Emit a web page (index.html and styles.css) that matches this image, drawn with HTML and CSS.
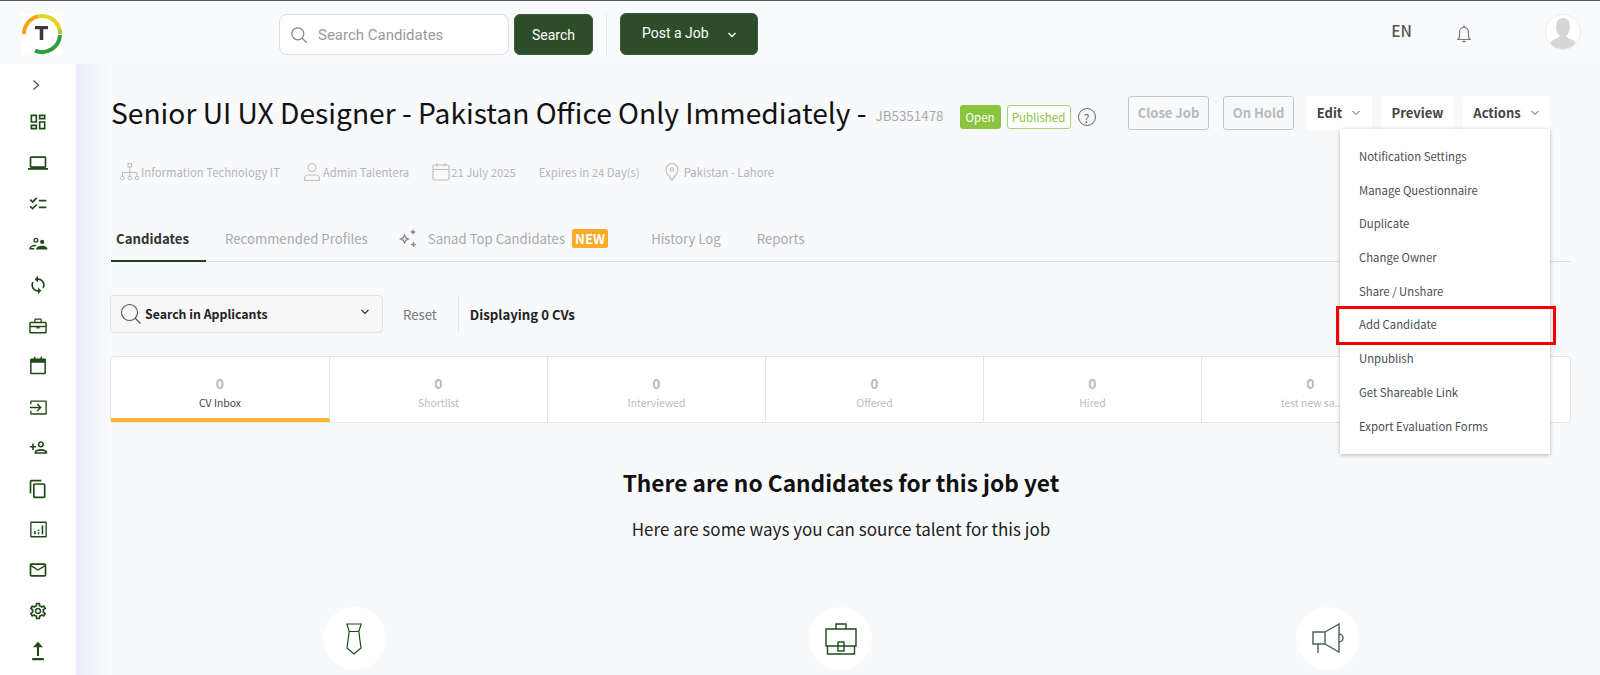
FILE: index.html
```html
<!DOCTYPE html>
<html lang="en">
<head>
  <meta charset="UTF-8">
  <meta name="viewport" content="width=device-width, initial-scale=1.0">
  <title>Senior UI UX Designer - Talentera</title>
  <link rel="stylesheet" href="styles.css">
</head>
<body>
<!--TOP BAR-->
  <header class="topbar">
    <div class="logo">
      <svg width="42" height="42" viewBox="0 0 42 42">
        <path d="M3 21A18 18 0 0 1 17 3.400" fill="none" stroke="#f9a11b" stroke-width="4"/>
        <path d="M17 3.400A18 18 0 0 1 38.400 16" fill="none" stroke="#e3d51f" stroke-width="4"/>
        <path d="M39 21A18 18 0 0 0 38.400 16" fill="none" stroke="#a9c92c" stroke-width="4"/>
        <path d="M39 22A18 18 0 0 1 14 37.600" fill="none" stroke="#2f9e3f" stroke-width="4"/>
        <path d="M14 13h13v3.200h-4.700V27h-3.600V16.200H14z" fill="#3a3a3a"/>
      </svg>
    </div>
    <div class="search-box">
      <svg class="search-icon" width="18" height="18" viewBox="0 0 18 18"><circle cx="7.800" cy="7.800" r="6" fill="none" stroke="#858a8f" stroke-width="1.300"/><path d="M12.200 12.200l4.500 4.500" stroke="#858a8f" stroke-width="1.300"/></svg>
      <span class="search-text">Search Candidates</span>
    </div>
    <button class="btn-green btn-search">Search</button>
    <div class="top-divider"></div>
    <button class="btn-green btn-post">Post a Job
      <svg width="10" height="6" viewBox="0 0 10 6"><path d="M1.500 1l3.500 3.500L8.500 1" fill="none" stroke="#fff" stroke-width="1.300"/></svg>
    </button>
    <div class="top-right">
      <span class="lang">EN</span>
      <svg class="bell" width="16" height="20" viewBox="0 0 16 20"><path d="M2 15.500h12l-1.500-2.500V8a4.500 4.500 0 0 0-9 0v5z" fill="none" stroke="#777" stroke-width="1.200"/><path d="M8 1.500v2M6.500 17.500h3" stroke="#777" stroke-width="1.500"/></svg>
      <div class="avatar">
        <svg width="34" height="34" viewBox="0 0 34 34"><path d="M17 3c4.500 0 7 3.500 7 8.500s-2 7.500-4 9.500c1 2 7 3 9 6l1 2a16.500 16.500 0 0 1-26 0l1-2c2-3 8-4 9-6-2-2-4-4.500-4-9.500S12.500 3 17 3z" fill="#d6d6d6"/></svg>
      </div>
    </div>
  </header>

  <div class="layout">
<!--SIDEBAR-->
    <nav class="sidebar">
      <div class="side-item side-toggle"><svg width="12" height="12" viewBox="0 0 12 12"><path d="M3.500 1.500l5 4.500-5 4.500" fill="none" stroke="#3d5a35" stroke-width="1.200"/></svg></div>
      <div class="side-item"><svg viewBox="0 0 24 24"><path d="M19 5v2h-4V5h4M9 5v6H5V5h4m10 8v6h-4v-6h4M9 17v2H5v-2h4M21 3h-8v6h8V3zM11 3H3v10h8V3zm10 8h-8v10h8V11zm-10 4H3v6h8v-6z"/></svg></div>
      <div class="side-item"><svg viewBox="0 0 24 24"><path d="M20 18c1.100 0 1.990-.9 1.990-2L22 6c0-1.100-.9-2-2-2H4c-1.100 0-2 .9-2 2v10c0 1.100.9 2 2 2H0v2h24v-2h-4zM4 6h16v10H4V6z"/></svg></div>
      <div class="side-item"><svg viewBox="0 0 24 24"><path d="M22 7h-9v2h9V7zm0 8h-9v2h9v-2zM5.540 11L2 7.460l1.410-1.410 2.120 2.120 4.240-4.240 1.410 1.410L5.540 11zm0 8L2 15.460l1.410-1.410 2.120 2.120 4.240-4.240 1.410 1.410L5.540 19z"/></svg></div>
      <div class="side-item"><svg viewBox="0 0 24 24"><path d="M9.500 4.500a3 3 0 1 1 0 6 3 3 0 0 1 0-6zm0 1.600a1.400 1.400 0 1 0 0 2.800 1.400 1.400 0 0 0 0-2.800zM17 7a2.500 2.500 0 1 1 0 5 2.500 2.500 0 0 1 0-5zM1.500 18.500c0-3.500 4-5.500 8-5.500l.8.100-1.400 1.600c-2.600.1-4.800 1.100-5.400 2.200H7.500v1.600zM9.500 18.500c0-2.800 4-4.500 7.500-4.500s6.500 1.700 6.500 4.500z"/></svg></div>
      <div class="side-item"><svg viewBox="0 0 24 24"><path d="M12 4V1L8 5l4 4V6c3.310 0 6 2.690 6 6 0 1.010-.25 1.970-.7 2.800l1.460 1.460C19.540 15.030 20 13.570 20 12c0-4.420-3.580-8-8-8zm0 14c-3.310 0-6-2.690-6-6 0-1.010.25-1.970.7-2.800L5.240 7.740C4.460 8.970 4 10.430 4 12c0 4.420 3.580 8 8 8v3l4-4-4-4v3z"/></svg></div>
      <div class="side-item"><svg viewBox="0 0 24 24"><path d="M9 3h6a1.500 1.500 0 0 1 1.500 1.500V7H21a1.500 1.500 0 0 1 1.500 1.500v11A1.500 1.500 0 0 1 21 21H3a1.500 1.500 0 0 1-1.500-1.500v-11A1.500 1.500 0 0 1 3 7h4.500V4.500A1.500 1.500 0 0 1 9 3zm0 4h6V4.600H9zM3.200 8.700v3.100h17.600V8.700zm0 4.800v5.800h17.600v-5.800H14V15h-4v-1.500z"/></svg></div>
      <div class="side-item"><svg viewBox="0 0 24 24"><path d="M7 1h2v2h6V1h2v2h3a1.500 1.500 0 0 1 1.500 1.500v16A1.500 1.500 0 0 1 20 22H4a1.500 1.500 0 0 1-1.500-1.500v-16A1.500 1.500 0 0 1 4 3h3zM4.300 8v12.200h15.400V8z"/></svg></div>
      <div class="side-item side-wide"><svg viewBox="0 0 24 24"><path d="M1.500 4.500A1.500 1.500 0 0 1 3 3h18a1.500 1.500 0 0 1 1.500 1.500v15A1.500 1.500 0 0 1 21 21H3a1.500 1.500 0 0 1-1.500-1.500V16h1.700v3.300h17.600V4.700H3.200V8H1.500zM1 11.100h11.500L9.700 8.300 11 7.100l5 4.900-5 4.900-1.300-1.200 2.800-2.800H1z"/></svg></div>
      <div class="side-item side-wide"><svg viewBox="0 0 24 24"><path d="M15 12c2.210 0 4-1.790 4-4s-1.790-4-4-4-4 1.790-4 4 1.790 4 4 4zm0-6c1.100 0 2 .9 2 2s-.9 2-2 2-2-.9-2-2 .9-2 2-2zm0 8c-2.670 0-8 1.340-8 4v2h16v-2c0-2.660-5.330-4-8-4zm-6 4c.22-.72 3.310-2 6-2 2.700 0 5.800 1.290 6 2H9zm-3-3v-3h3v-2H6V7H4v3H1v2h3v3h2z"/></svg></div>
      <div class="side-item"><svg viewBox="0 0 24 24"><path d="M16 1H4c-1.100 0-2 .9-2 2v14h2V3h12V1zm3 4H8c-1.100 0-2 .9-2 2v14c0 1.100.9 2 2 2h11c1.100 0 2-.9 2-2V7c0-1.100-.9-2-2-2zm0 16H8V7h11v14z"/></svg></div>
      <div class="side-item side-wide"><svg viewBox="0 0 24 24"><path d="M21 2H3a1.500 1.500 0 0 0-1.500 1.500v17A1.500 1.500 0 0 0 3 22h18a1.500 1.500 0 0 0 1.500-1.500v-17A1.500 1.500 0 0 0 21 2zm-.2 18.300H3.200V3.700h17.600zM6.500 14h2v4h-2zm4.500-2h2v2h-2zm0 3.500h2V18h-2zM16 7h2v11h-2z"/></svg></div>
      <div class="side-item"><svg viewBox="0 0 24 24"><path d="M22 6c0-1.100-.9-2-2-2H4c-1.100 0-2 .9-2 2v12c0 1.100.9 2 2 2h16c1.100 0 2-.9 2-2V6zm-2 0l-8 5-8-5h16zm0 12H4V8l8 5 8-5v10z"/></svg></div>
      <div class="side-item"><svg viewBox="0 0 24 24"><path d="M19.430 12.980c.04-.32.07-.64.07-.98 0-.34-.03-.66-.07-.98l2.110-1.650c.19-.15.24-.42.12-.64l-2-3.460c-.12-.22-.39-.3-.61-.22l-2.490 1c-.52-.4-1.080-.73-1.690-.98l-.38-2.650C14.460 2.180 14.250 2 14 2h-4c-.25 0-.46.18-.49.42l-.38 2.650c-.61.25-1.170.59-1.690.98l-2.490-1c-.23-.09-.49 0-.61.22l-2 3.460c-.13.22-.07.49.12.64l2.110 1.650c-.04.32-.07.65-.07.98 0 .33.03.66.07.98l-2.110 1.650c-.19.15-.24.42-.12.64l2 3.460c.12.22.39.3.61.22l2.490-1c.52.4 1.080.73 1.690.98l.38 2.650c.03.24.24.42.49.42h4c.25 0 .46-.18.49-.42l.38-2.650c.61-.25 1.170-.59 1.690-.98l2.490 1c.23.09.49 0 .61-.22l2-3.460c.12-.22.07-.49-.12-.64l-2.010-1.650zm-1.980-1.710c.04.31.05.52.05.73 0 .21-.02.43-.05.73l-.14 1.130.89.7 1.080.84-.7 1.210-1.270-.51-1.040-.42-.9.68c-.43.32-.84.56-1.250.73l-1.060.43-.16 1.130-.2 1.350h-1.400l-.19-1.350-.16-1.130-1.060-.43c-.43-.18-.83-.41-1.230-.71l-.91-.7-1.060.43-1.270.51-.7-1.210 1.080-.84.89-.7-.14-1.130c-.03-.31-.05-.54-.05-.74s.02-.43.05-.73l.14-1.130-.89-.7-1.080-.84.7-1.210 1.270.51 1.040.42.9-.68c.43-.32.84-.56 1.250-.73l1.060-.43.16-1.130.2-1.350h1.390l.19 1.350.16 1.130 1.060.43c.43.18.83.41 1.230.71l.91.7 1.060-.43 1.270-.51.7 1.210-1.070.85-.89.7.14 1.130zM12 8c-2.210 0-4 1.790-4 4s1.790 4 4 4 4-1.790 4-4-1.790-4-4-4zm0 6c-1.100 0-2-.9-2-2s.9-2 2-2 2 .9 2 2-.9 2-2 2z"/></svg></div>
      <div class="side-item"><svg viewBox="0 0 24 24"><path d="M12 1l6 6.500h-4.800V18h-2.400V7.500H6zM5 20.500h14V23H5z"/></svg></div>
    </nav>

<!--MAIN CONTENT-->
    <main class="content">
      <div class="title-row">
        <h1 class="job-title">Senior UI UX Designer - Pakistan Office Only Immediately -</h1>
        <span class="job-code">JB5351478</span>
        <span class="badge badge-open">Open</span>
        <span class="badge badge-published">Published</span>
        <span class="help">?</span>
        <div class="job-actions">
          <button class="btn-outline btn-close">Close Job</button>
          <button class="btn-outline btn-hold">On Hold</button>
          <button class="btn-white btn-edit">Edit
            <svg width="10" height="6" viewBox="0 0 10 6"><path d="M1.500 1l3.500 3.500L8.500 1" fill="none" stroke="#555" stroke-width="1"/></svg>
          </button>
          <button class="btn-white btn-preview">Preview</button>
          <div class="actions-wrap">
            <button class="btn-white btn-actions">Actions
              <svg width="10" height="6" viewBox="0 0 10 6"><path d="M1.500 1l3.500 3.500L8.500 1" fill="none" stroke="#555" stroke-width="1"/></svg>
            </button>
            <ul class="dropdown">
              <li>Notification Settings</li>
              <li>Manage Questionnaire</li>
              <li>Duplicate</li>
              <li>Change Owner</li>
              <li>Share / Unshare</li>
              <li class="marked">Add Candidate</li>
              <li>Unpublish</li>
              <li>Get Shareable Link</li>
              <li>Export Evaluation Forms</li>
            </ul>
          </div>
        </div>
      </div>

      <div class="meta-row">
        <span class="meta-item meta-dept">
          <svg width="20" height="20" viewBox="0 0 20 20"><g fill="none" stroke="#bdbdbd" stroke-width="1"><rect x="8" y="1.500" width="3.500" height="3.500"/><path d="M9.800 5v5M2.500 14v-3.500h14.500V14M9.800 10v4"/><circle cx="2.500" cy="16" r="1.800"/><circle cx="9.800" cy="16" r="1.800"/><circle cx="17" cy="16" r="1.800"/></g></svg>
          Information Technology IT</span>
        <span class="meta-item meta-admin">
          <svg width="18" height="20" viewBox="0 0 18 20"><g fill="none" stroke="#bdbdbd" stroke-width="1.100"><circle cx="9" cy="5.500" r="4"/><path d="M1.500 18.500v-2c0-2 2-3.500 4-3.500h7c2 0 4 1.500 4 3.500v2z"/></g></svg>
          Admin Talentera</span>
        <span class="meta-item meta-date">
          <svg width="18" height="20" viewBox="0 0 18 20"><g fill="none" stroke="#bdbdbd" stroke-width="1.100"><rect x="1" y="3" width="16" height="15" rx="1.500"/><path d="M1 7.500h16M5 1v3.500M13 1v3.500"/></g></svg>
          21 July 2025</span>
        <span class="meta-item meta-expires">Expires in 24 Day(s)</span>
        <span class="meta-item meta-place">
          <svg width="14" height="20" viewBox="0 0 14 20"><g fill="none" stroke="#bdbdbd" stroke-width="1.100"><path d="M7 18.500C4 14 1 11 1 7.500a6 6 0 0 1 12 0C13 11 10 14 7 18.500z"/><circle cx="7" cy="7.500" r="1.800"/></g></svg>
          Pakistan - Lahore</span>
      </div>

      <div class="tabs">
        <span class="tab tab-active">Candidates</span>
        <span class="tab tab-rec">Recommended Profiles</span>
        <span class="tab tab-sanad">
          <svg width="20" height="20" viewBox="0 0 20 20" fill="#8a8a8a"><path d="M6.500 5.500l1.800 3.700 3.700 1.800-3.700 1.800-1.800 3.700-1.800-3.700L1 11l3.700-1.800zm0 3L5.700 10.200 4 11l1.700.8.8 1.700.8-1.700L9 11l-1.700-.8z"/><path d="M15 1l1 2 2 1-2 1-1 2-1-2-2-1 2-1zM15.500 13.500l1 2 2 1-2 1-1 2-1-2-2-1 2-1z"/></svg>
          Sanad Top Candidates <b class="new-tag">NEW</b></span>
        <span class="tab tab-history">History Log</span>
        <span class="tab tab-reports">Reports</span>
      </div>

      <div class="filter-row">
        <div class="applicant-search">
          <svg width="22" height="22" viewBox="0 0 22 22"><circle cx="9.500" cy="9.500" r="8" fill="none" stroke="#555" stroke-width="1.100"/><path d="M15 15l5.500 5.500" stroke="#555" stroke-width="1.300"/></svg>
          <span class="applicant-text">Search in Applicants</span>
          <svg class="applicant-arrow" width="10" height="6" viewBox="0 0 10 6"><path d="M1.500 1l3.500 3.500L8.500 1" fill="none" stroke="#333" stroke-width="1.200"/></svg>
        </div>
        <span class="reset">Reset</span>
        <span class="displaying">Displaying 0 CVs</span>
      </div>

      <div class="stages">
        <div class="stage stage-active"><b>0</b><span>CV Inbox</span></div>
        <div class="stage"><b>0</b><span>Shortlist</span></div>
        <div class="stage"><b>0</b><span>Interviewed</span></div>
        <div class="stage"><b>0</b><span>Offered</span></div>
        <div class="stage"><b>0</b><span>Hired</span></div>
        <div class="stage"><b>0</b><span>test new sa..</span></div>
        <div class="stage stage-last"></div>
      </div>

      <h2 class="empty-title">There are no Candidates for this job yet</h2>
      <p class="empty-text">Here are some ways you can source talent for this job</p>

      <div class="sources">
        <div class="source"><svg width="16" height="32" viewBox="0 0 16 32"><g fill="none" stroke="#1d4a1a" stroke-width="1.200"><path d="M.8 1h14.400l-2.400 7.500H3.200zM3.200 8.500L1 25l7 6 7-6-2.200-16.500"/></g></svg></div>
        <div class="source"><svg width="34" height="32" viewBox="0 0 34 32"><g fill="none" stroke="#1d4a1a" stroke-width="1.400"><path d="M12 6V1h10v5M2 6h30v17H2zM3.500 23v8h27v-8"/><rect x="14" y="19" width="6" height="9"/></g></svg></div>
        <div class="source"><svg width="34" height="32" viewBox="0 0 34 32"><g fill="none" stroke="#48605a" stroke-width="1.400"><path d="M2 9h12v12H2zM14 9L28 1v28L14 21M28 11a4 4 0 0 1 0 8M7 21v9"/></g></svg></div>
      </div>
    </main>
  </div>
</body>
</html>
```

FILE: styles.css
```css
* {
  box-sizing: border-box;
}
body {
  margin: 0;
  height: 675px;
  overflow: hidden;
  background-color: #f9fafc;
  font-family: "Noto Sans CJK SC", "Open Sans", sans-serif;
  color: #333;
}
button {
  font-family: inherit;
  cursor: pointer;
}

/* top bar */
.topbar {
  height: 64px;
  display: flex;
  align-items: flex-start;
  border-top: 1px solid #5a5a5a;
  background-color: #f9fafc;
}
.logo {
  width: 42px;
  height: 42px;
  margin: 12px 0 0 21px;
  background-color: #fff;
}
.search-box {
  width: 230px;
  height: 41px;
  margin: 13px 0 0 216px;
  padding-left: 10px;
  display: flex;
  align-items: center;
  gap: 10px;
  background-color: #fff;
  border: 1px solid #dcdfe2;
  border-radius: 8px;
}
.search-text {
  font-family: Roboto, sans-serif;
  font-size: 15px;
  color: #9a9a9a;
}
.btn-green {
  height: 41px;
  margin-top: 13px;
  color: #fff;
  background-color: #2d4d29;
  border: 1px solid #3c5c38;
  border-radius: 6px;
  font-family: Roboto, sans-serif;
  font-size: 14px;
}
.btn-search {
  width: 79px;
  margin-left: 5px;
}
.top-divider {
  width: 1px;
  height: 42px;
  margin: 13px 13px 0;
  background-color: #e8e9eb;
}
.btn-post {
  width: 138px;
  height: 42px;
  margin-top: 12px;
  padding: 0 0 2px 21px;
  text-align: left;
}
.btn-post svg {
  margin-left: 15px;
}
.top-right {
  margin-left: auto;
  padding-right: 19px;
  display: flex;
  align-items: flex-start;
}
.lang {
  margin-top: 18px;
  font-size: 15.500px;
  font-weight: 500;
  color: #555;
}
.bell {
  margin: 23px 0 0 44px;
}
.avatar {
  width: 36px;
  height: 36px;
  margin: 13px 0 0 73px;
  background-color: #fff;
  border: 1px solid #ececec;
  border-radius: 50%;
  overflow: hidden;
}

/* sidebar */
.layout {
  display: flex;
  height: 611px;
}
.sidebar {
  width: 76px;
  flex-shrink: 0;
  padding-top: 4px;
  background-color: #fff;
}
.side-item {
  height: 40.700px;
  display: flex;
  align-items: center;
  justify-content: center;
}
.side-item svg {
  width: 20px;
  height: 20px;
  fill: #1e4a16;
}
.side-item.side-wide svg {
  width: 19px;
  height: 19px;
}
.side-toggle {
  height: 34px;
  padding-right: 4px;
}
.side-toggle svg {
  width: 12px;
  height: 12px;
  fill: none;
}

/* main */
.content {
  flex: 1;
  min-width: 0;
  padding: 32px 29px 0 35px;
  background: linear-gradient(90deg, #e9ebfa 0, #f0f2fa 10px, #f8f9fb 34px);
}
.title-row {
  height: 34px;
  display: flex;
  align-items: center;
}
.job-title {
  margin: 0;
  padding-bottom: 2px;
  font-size: 28.200px;
  font-weight: 400;
  line-height: 34px;
  color: #111;
  white-space: nowrap;
}
.job-code {
  margin: 4px 0 0 9px;
  font-size: 13.400px;
  color: #aaa;
}
.badge {
  height: 24px;
  margin-top: 8px;
  display: flex;
  align-items: center;
  justify-content: center;
  border-radius: 3px;
}
.badge-open {
  width: 41px;
  margin-left: 16px;
  font-size: 11.500px;
  color: #fff;
  background-color: #8bc540;
}
.badge-published {
  width: 64px;
  margin-left: 6px;
  font-size: 11.500px;
  color: #8bc540;
  background-color: #fff;
  border: 1px solid #a9d47a;
}
.help {
  width: 18px;
  height: 18px;
  margin: 8px 0 0 7px;
  display: flex;
  align-items: center;
  justify-content: center;
  border: 1px solid #666;
  border-radius: 50%;
  font-size: 12px;
  color: #666;
}
.job-actions {
  margin-left: auto;
  margin-right: 21px;
  display: flex;
  align-items: center;
}
.btn-outline {
  height: 34px;
  padding: 0 0 2px;
  font-size: 13px;
  font-weight: 700;
  color: #b9b9b9;
  background-color: transparent;
  border: 1px solid #c4c4c4;
  border-radius: 3px;
}
.btn-close {
  width: 81px;
  margin-right: 14px;
}
.btn-hold {
  width: 71px;
  margin-right: 12px;
}
.btn-white {
  height: 34px;
  padding: 0 0 2px;
  font-size: 13px;
  font-weight: 700;
  color: #444;
  background-color: #fff;
  border: 0;
  border-radius: 3px;
}
.btn-white svg {
  margin-left: 6px;
  vertical-align: 2px;
}
.btn-edit {
  width: 66px;
  margin-right: 10px;
}
.btn-preview {
  width: 71px;
  margin-right: 10px;
}
.btn-actions {
  width: 87px;
}
.actions-wrap {
  position: relative;
  height: 34px;
}
.dropdown {
  position: absolute;
  top: 33px;
  right: 0;
  z-index: 5;
  width: 210px;
  height: 325px;
  margin: 0;
  padding: 11px 0 0;
  list-style: none;
  background-color: #fff;
  box-shadow: 0 1px 4px rgba(0, 0, 0, 0.28);
}
.dropdown li {
  position: relative;
  height: 33.700px;
  padding-left: 19px;
  font-size: 11.350px;
  line-height: 33.700px;
  color: #4a4f57;
}
.marked::after {
  content: "";
  position: absolute;
  top: -2px;
  left: -4px;
  right: -6px;
  bottom: -3px;
  border: 3px solid #f70000;
}

.meta-row {
  height: 20px;
  margin-top: 32px;
  display: flex;
  align-items: center;
  font-size: 11.300px;
  color: #b5b5b5;
}
.meta-item {
  display: flex;
  align-items: center;
  gap: 1px;
  white-space: nowrap;
}
.meta-dept {
  margin-left: 9px;
}
.meta-admin {
  margin-left: 23px;
  gap: 2px;
}
.meta-date {
  margin-left: 23px;
}
.meta-expires {
  margin-left: 23px;
}
.meta-place {
  margin-left: 25px;
  gap: 5px;
}

.tabs {
  height: 47px;
  margin-top: 33px;
  display: flex;
  align-items: stretch;
  border-bottom: 1px solid #dcdde0;
  font-size: 13.200px;
  color: #a9a9a9;
}
.tab {
  display: flex;
  align-items: center;
  white-space: nowrap;
}
.tab-active {
  width: 95px;
  padding: 2px 0 0 5px;
  margin-bottom: -1px;
  font-weight: 700;
  color: #333;
  border-bottom: 2px solid #1a4410;
}
.tab-rec {
  margin-left: 19px;
}
.tab-sanad {
  margin-left: 30px;
  gap: 10px;
}
.new-tag {
  height: 19px;
  margin-left: -3px;
  padding: 0 3px;
  display: flex;
  align-items: center;
  color: #fff;
  font-size: 13.200px;
  font-weight: 700;
  background-color: #fbab27;
  border-radius: 2px;
}
.tab-history {
  margin-left: 43px;
}
.tab-reports {
  margin-left: 36px;
}

.filter-row {
  height: 38px;
  margin: 33px 0 0 -1px;
  display: flex;
  align-items: center;
}
.applicant-search {
  width: 273px;
  height: 38px;
  padding: 0 10px 0 9px;
  display: flex;
  align-items: center;
  gap: 3px;
  background-color: #f7f7f7;
  border: 1px solid #e2e3e5;
  border-radius: 4px;
}
.applicant-text {
  font-size: 12.300px;
  font-weight: 700;
  color: #222;
}
.applicant-arrow {
  margin: -4px 2px 0 auto;
}
.reset {
  margin-left: 20px;
  font-size: 13.200px;
  color: #777;
}
.displaying {
  margin-left: 21px;
  padding-left: 11px;
  height: 38px;
  display: flex;
  align-items: center;
  border-left: 1px solid #e5e6e8;
  font-size: 13.200px;
  font-weight: 700;
  color: #222;
}

.stages {
  height: 67px;
  margin: 23px 0 0 -1px;
  display: flex;
  background-color: #fff;
  border: 1px solid #e4e4e6;
  border-radius: 4px;
}
.stage {
  width: 218px;
  padding-top: 15px;
  display: flex;
  flex-direction: column;
  align-items: center;
  border-right: 1px solid #e4e4e6;
  color: #bbb;
}
.stage:first-child {
  width: 219px;
}
.stage b {
  font-size: 14px;
  line-height: 22px;
}
.stage span {
  font-size: 10.400px;
  line-height: 17px;
}
.stage-active {
  border-bottom: 4px solid #fbb52f;
}
.stage-active span {
  color: #444;
}
.stage-last {
  flex: 1;
  border-right: 0;
}

.empty-title {
  margin: 42px 0 0;
  font-size: 22.700px;
  font-weight: 700;
  line-height: 36px;
  text-align: center;
  color: #111;
}
.empty-text {
  margin: 15px 0 0;
  font-size: 17px;
  line-height: 26px;
  text-align: center;
  color: #222;
}
.sources {
  margin-top: 65px;
  display: grid;
  grid-template-columns: repeat(3, 1fr);
}
.source {
  width: 63px;
  height: 63px;
  margin: 0 auto;
  display: flex;
  align-items: center;
  justify-content: center;
  background-color: #fff;
  border-radius: 50%;
}
```
